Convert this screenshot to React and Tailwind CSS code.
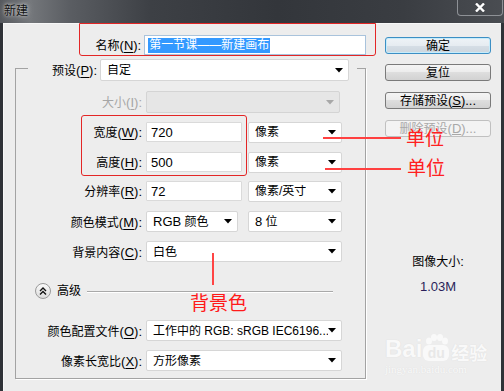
import React from "react";

function Lbl({ t, k, disabled }) {
  return (
    <span className={disabled ? "text-[#a6a6a6] whitespace-nowrap" : "text-black whitespace-nowrap"}>
      <span className="text-[12px]">{t}</span>
      <span className="text-[13px]">
        (<span className="underline underline-offset-[2px]">{k}</span>):
      </span>
    </span>
  );
}

function Arrow({ disabled }) {
  return (
    <svg width="8" height="5" viewBox="0 0 8 5" className="shrink-0">
      <path d="M0 0 L8 0 L4 4.5 Z" fill={disabled ? "#a8a8a8" : "#000"} />
    </svg>
  );
}

function Combo({ className, children, disabled }) {
  return (
    <div
      className={
        (disabled
          ? "bg-[#e6e6e6] border-[#d4d4d4] "
          : "bg-white border-[#d6d6d6] ") +
        "flex items-center justify-between border rounded-[2px] pl-[6px] pr-[5px] " +
        className
      }
    >
      <span className="text-[12px] leading-none whitespace-nowrap overflow-hidden">{children}</span>
      <Arrow disabled={disabled} />
    </div>
  );
}

function Field({ className, children }) {
  return (
    <div className={"flex items-center bg-white border border-[#dadada] rounded-[1px] pl-[4px] " + className}>
      <span className="text-[13px] leading-none">{children}</span>
    </div>
  );
}

function Row({ className, label, children }) {
  return (
    <div className={"flex items-center " + className}>
      <div className="w-[126px] flex justify-end leading-none">{label}</div>
      <div className="ml-[4px] flex items-center">{children}</div>
    </div>
  );
}

function Btn({ children, primary, disabled, className }) {
  let cls =
    "flex items-center justify-center h-[17px] rounded-[3px] border text-[12px] leading-none ";
  if (primary)
    cls +=
      "border-[#3c8fc4] bg-[linear-gradient(#eef3f7_0%,#e6ecf1_50%,#d6dee6_50%,#ccd6de_100%)] shadow-[inset_0_0_0_1px_#c6ecfb] text-black ";
  else if (disabled)
    cls += "border-[#c0c0c0] bg-[#f3f3f3] text-[#a8a8a8] ";
  else
    cls +=
      "border-[#7a7a7a] bg-[linear-gradient(#f4f4f4_0%,#ececec_50%,#dedede_50%,#d2d2d2_100%)] text-black ";
  return <div className={cls + className}>{children}</div>;
}

export default function App() {
  return (
    <div className="relative w-[504px] h-[391px] overflow-hidden bg-[#2f3237] font-['Liberation_Sans','Noto_Sans_CJK_SC',sans-serif] flex flex-col">
      {/* title bar */}
      <div className="h-[23px] flex items-start justify-between bg-[linear-gradient(90deg,#55585d_0%,#74777b_6%,#5a5d62_14%,#3d4045_30%,#33363b_55%,#3a3d42_80%,#4a4d52_100%)]">
        <div className="ml-[4px] mt-[5px] text-[12px] leading-none text-[#111] [text-shadow:0_0_6px_#c8c8c8,0_0_3px_#d0d0d0]">
          新建
        </div>
        <div className="mr-[1px] w-[46px] h-[16px] border border-t-0 border-[#8e9196] rounded-b-[4px] flex items-center justify-center">
          <svg width="10" height="9" viewBox="0 0 10 9">
            <path d="M1 0.5 L9 8.5 M9 0.5 L1 8.5" stroke="#fff" strokeWidth="2.4" />
          </svg>
        </div>
      </div>

      {/* body */}
      <div className="flex-1 ml-[3px] mr-[3px] bg-[#ededed] border-l border-t border-[#f7f7f7] flex">
        {/* left column */}
        <div className="w-[362px] flex flex-col">
          {/* name row */}
          <div className="mt-[11px] flex items-center h-[20px]">
            <div className="w-[138px] flex justify-end leading-none">
              <Lbl t="名称" k="N" />
            </div>
            <div className="ml-[3px] w-[223px] h-[20px] bg-white border border-[#a9c3dc] flex items-center pl-[3px]">
              <span className="bg-[#3399ff] text-white text-[12px] leading-[15px] h-[15px] px-[1px]">
                第一节课——新建画布
              </span>
            </div>
          </div>

          {/* group box */}
          <div className="mt-[13px] ml-[11px] w-[351px] h-[311px] border border-[#a3a3a3] shadow-[1px_1px_0_#ffffff] flex flex-col">
            {/* preset (legend) */}
            <div className="-mt-[10px] ml-[12px] w-[329px] h-[22px] bg-[#ededed] flex items-center">
              <div className="w-[69px] flex justify-end leading-none">
                <Lbl t="预设" k="P" />
              </div>
              <Combo className="ml-[3px] w-[249px] h-[22px]">自定</Combo>
            </div>

            <Row className="mt-[10px] h-[22px]" label={<Lbl t="大小" k="I" disabled />}>
              <Combo disabled className="w-[194px] h-[22px]">{""}</Combo>
            </Row>

            <Row className="mt-[8px] h-[22px]" label={<Lbl t="宽度" k="W" />}>
              <Field className="w-[96px] h-[20px]">720</Field>
              <Combo className="ml-[6px] w-[94px] h-[21px]">像素</Combo>
            </Row>

            <Row className="mt-[8px] h-[22px]" label={<Lbl t="高度" k="H" />}>
              <Field className="w-[96px] h-[20px]">500</Field>
              <Combo className="ml-[6px] w-[94px] h-[21px]">像素</Combo>
            </Row>

            <Row className="mt-[7px] h-[22px]" label={<Lbl t="分辨率" k="R" />}>
              <Field className="w-[96px] h-[20px]">72</Field>
              <Combo className="ml-[6px] w-[94px] h-[21px]">像素/英寸</Combo>
            </Row>

            <Row className="mt-[9px] h-[21px]" label={<Lbl t="颜色模式" k="M" />}>
              <Combo className="w-[92px] h-[21px]">
                <span className="text-[13px]">RGB</span> 颜色
              </Combo>
              <Combo className="ml-[10px] w-[94px] h-[21px]">
                <span className="text-[13px]">8</span> 位
              </Combo>
            </Row>

            <Row className="mt-[9px] h-[21px]" label={<Lbl t="背景内容" k="C" />}>
              <Combo className="w-[196px] h-[21px]">白色</Combo>
            </Row>

            {/* advanced */}
            <div className="mt-[21px] h-[16px] flex items-center">
              <div className="ml-[19px] w-[16px] h-[16px] rounded-full border border-[#9a9a9a] bg-[linear-gradient(#fafafa,#dcdcdc)] flex items-center justify-center">
                <svg width="8" height="8" viewBox="0 0 8 8">
                  <path d="M1 4 L4 1 L7 4 M1 7.5 L4 4.5 L7 7.5" stroke="#111" strokeWidth="1.4" fill="none" />
                </svg>
              </div>
              <span className="ml-[6px] text-[12px] leading-none">高级</span>
              <div className="ml-[6px] w-[246px] h-[1px] bg-[#a9a9a9] shadow-[0_1px_0_#ffffff]" />
            </div>

            <Row className="mt-[21px] h-[21px]" label={<Lbl t="颜色配置文件" k="O" />}>
              <Combo className="w-[196px] h-[21px]">
                工作中的 <span className="text-[12px]">RGB: sRGB IEC6196...</span>
              </Combo>
            </Row>

            <Row className="mt-[9px] h-[21px]" label={<Lbl t="像素长宽比" k="X" />}>
              <Combo className="w-[196px] h-[21px]">方形像素</Combo>
            </Row>
          </div>
        </div>

        {/* right column */}
        <div className="ml-[19px] w-[106px] flex flex-col">
          <Btn primary className="mt-[13px]">确定</Btn>
          <Btn className="mt-[10px]">复位</Btn>
          <Btn className="mt-[11px]">
            存储预设<span className="text-[13px]">(<span className="underline">S</span>)...</span>
          </Btn>
          <Btn disabled className="mt-[11px]">
            删除预设<span className="text-[13px]">(<span className="underline">D</span>)...</span>
          </Btn>
          <div className="mt-[118px] h-[14px] text-center text-[12px] leading-[14px]">
            图像大小<span className="text-[13px]">:</span>
          </div>
          <div className="mt-[11px] h-[14px] text-center text-[13px] leading-[14px] text-[#2a1f5a]">
            1.03M
          </div>
        </div>
      </div>

      {/* red annotations */}
      <div className="absolute left-[79px] top-[23px] w-[297px] h-[33px] border border-[#e32626] rounded-b-[3px]" />
      <div className="absolute left-[81px] top-[115px] w-[166px] h-[61px] border border-[#e32626] rounded-[3px]" />
      <div className="absolute left-[323px] top-[137px] w-[78px] h-[2px] bg-[#ff4040]" />
      <div className="absolute left-[406px] top-[127px] text-[19px] leading-none text-[#ff2020] font-['Noto_Sans_CJK_SC',sans-serif]">
        单位
      </div>
      <div className="absolute left-[325px] top-[168px] w-[76px] h-[2px] bg-[#ff4040]" />
      <div className="absolute left-[407px] top-[157px] text-[19px] leading-none text-[#ff2020] font-['Noto_Sans_CJK_SC',sans-serif]">
        单位
      </div>
      <div className="absolute left-[212px] top-[253px] w-[2px] h-[32px] bg-[#ff4444]" />
      <div className="absolute left-[190px] top-[292px] text-[19px] leading-none text-[#ff1a1a] font-['Noto_Sans_CJK_SC',sans-serif]">
        背景色
      </div>

      {/* watermark */}
      <div className="absolute left-[385px] top-[333px] flex flex-col items-start opacity-70">
        <div className="flex items-end h-[28px]">
          <span className="text-[24px] font-bold leading-none text-white [text-shadow:0_0_1px_#d0d0d0]">Bai</span>
          <div className="relative ml-[1px] flex flex-col items-center">
            <svg width="26" height="12" viewBox="0 0 26 12" className="mb-[-1px]">
              <ellipse cx="6" cy="7" rx="3" ry="3.5" fill="#fff" />
              <ellipse cx="11" cy="3.5" rx="3" ry="3.5" fill="#fff" />
              <ellipse cx="17" cy="3.5" rx="3" ry="3.5" fill="#fff" />
              <ellipse cx="22" cy="7" rx="3" ry="3.5" fill="#fff" />
            </svg>
            <div className="w-[26px] h-[16px] rounded-[6px] bg-white flex items-center justify-center text-[14px] font-bold leading-none text-[#e6e6e6]">
              du
            </div>
          </div>
          <span className="ml-[2px] text-[18px] font-bold leading-none text-white [text-shadow:0_0_1px_#d0d0d0] font-['Noto_Sans_CJK_SC',sans-serif]">
            经验
          </span>
        </div>
        <div className="mt-[3px] text-[11px] leading-none text-white [text-shadow:0_0_1px_#d0d0d0] font-['Liberation_Serif',serif]">
          jingyan.baidu.com
        </div>
      </div>
    </div>
  );
}
